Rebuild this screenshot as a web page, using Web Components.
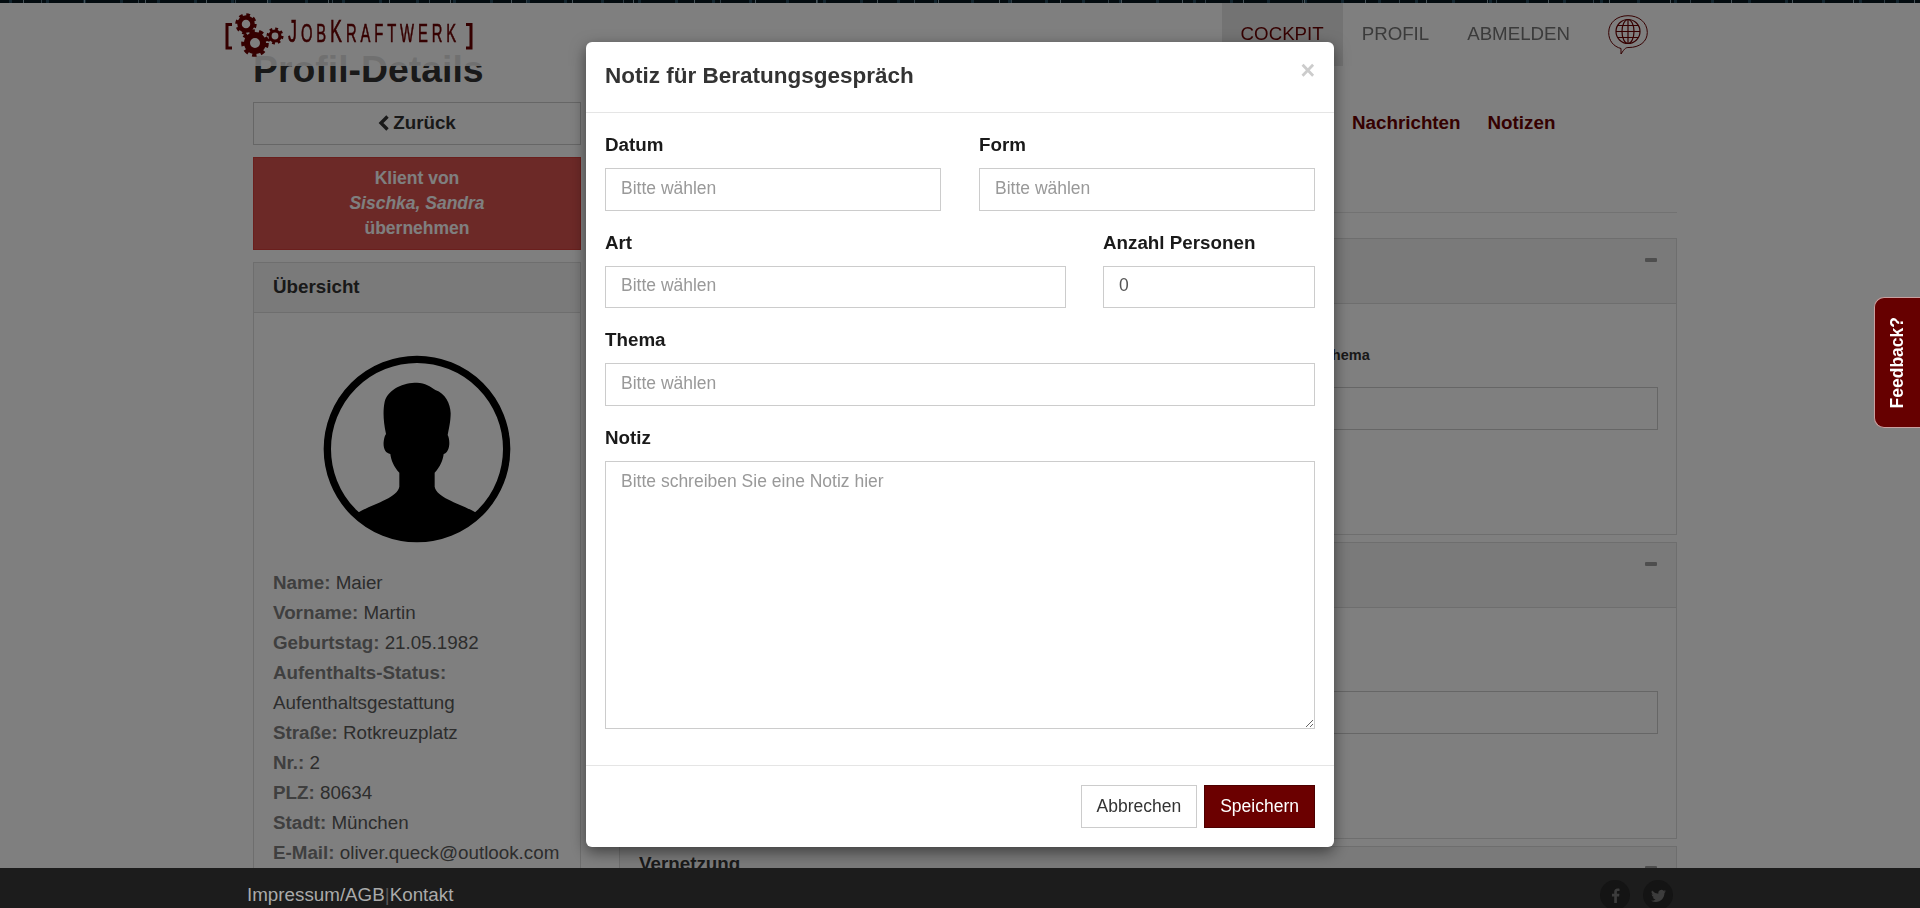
<!DOCTYPE html>
<html lang="de">
<head>
<meta charset="utf-8">
<title>JobKraftwerk - Profil-Details</title>
<style>
  html, body { margin: 0; height: 100%; overflow: hidden; background: #fff; }
  body { font: 18.8px/25px "Liberation Sans", Arial, sans-serif; color: #333; }
</style>
</head>
<body>
<job-nav></job-nav>

<profile-page>
  <client-sidebar slot="side" name="Sischka, Sandra">
    <info-row label="Name:">Maier</info-row>
    <info-row label="Vorname:">Martin</info-row>
    <info-row label="Geburtstag:">21.05.1982</info-row>
    <info-row label="Aufenthalts-Status:"></info-row>
    <info-row>Aufenthaltsgestattung</info-row>
    <info-row label="Straße:">Rotkreuzplatz</info-row>
    <info-row label="Nr.:">2</info-row>
    <info-row label="PLZ:">80634</info-row>
    <info-row label="Stadt:">München</info-row>
    <info-row label="E-Mail:">oliver.queck@outlook.com</info-row>
  </client-sidebar>

  <collapse-panel field="Thema"></collapse-panel>
  <collapse-panel></collapse-panel>
  <collapse-panel>Vernetzung</collapse-panel>
</profile-page>

<note-modal></note-modal>
<site-footer></site-footer>
<feedback-tab>Feedback?</feedback-tab>

<script>
// Top navigation
class JobNav extends HTMLElement {
  constructor() {
    super();
    this.attachShadow({ mode: 'open' });
    this.shadowRoot.innerHTML = `
      <style>
        :host {
          position: fixed; top: 0; left: 0; right: 0; z-index: 5;
          display: block; height: 66px;
          background: rgba(255, 255, 255, .86);
        }
        .stars {
          height: 3px;
          background-color: #07161f;
          background-image:
            repeating-linear-gradient(90deg, transparent 0 23px, #8fa6b2 23px 24px, transparent 24px 61px),
            repeating-linear-gradient(90deg, transparent 0 9px, #24495c 9px 12px, transparent 12px 37px),
            repeating-linear-gradient(90deg, transparent 0 41px, #5b7787 41px 42px, transparent 42px 97px);
        }
        .bar {
          display: flex; justify-content: space-between; align-items: flex-start;
          height: 63px; padding: 0 272px 0 225px;
        }
        .logo { width: 248px; height: 63px; position: relative; color: #6b0000; }
        .logo svg { position: absolute; left: 0; top: -3px; }
        .name {
          position: absolute; left: 63px; top: 14px; white-space: nowrap;
          font-size: 25.5px; line-height: 30px; letter-spacing: 6.7px;
          -webkit-text-stroke: .6px #6b0000;
          transform: scaleX(.58); transform-origin: left center;
        }
        .name b { font-size: 31px; font-weight: 400; }
        .links { display: flex; align-items: flex-start; font-size: 18.7px; }
        a { display: block; padding: 0 19px; line-height: 62px; height: 63px; color: #777; text-decoration: none; }
        a.on { color: #6b0000; background: #e7e7e7; }
        .globe { margin: 12px 0 0 19px; display: block; }
      </style>
      <div class="stars"></div>
      <div class="bar">
        <div class="logo">
          <svg width="248" height="66" viewBox="0 0 248 66" fill="none" stroke="#6b0000">
            <path d="M7 24.5H2V48H7M241 24.5H246V48H241" stroke-width="3"/>
            <circle cx="21" cy="24" r="6.5" stroke-width="4.500"/>
            <circle cx="21" cy="24" r="9" stroke-width="3.400" stroke-dasharray="3.600 3.470"/>
            <circle cx="30" cy="43" r="8" stroke-width="6"/>
            <circle cx="30" cy="43" r="12" stroke-width="3.600" stroke-dasharray="4.400 4.200"/>
            <circle cx="50" cy="36" r="5" stroke-width="3.200"/>
            <circle cx="50" cy="36" r="7.200" stroke-width="2.600" stroke-dasharray="2.800 2.850"/>
          </svg>
          <span class="name"><b>J</b>OB<b>K</b>RAFTWERK</span>
        </div>
        <div class="links">
          <a class="on" href="#">COCKPIT</a>
          <a href="#">PROFIL</a>
          <a href="#">ABMELDEN</a>
          <svg class="globe" width="40" height="40" viewBox="0 0 40 40" fill="none" stroke="#6b0000" stroke-width="1.200">
            <path d="M13 33.500C5.500 31.500 .7 25.800 .7 17.500 .7 7.500 9 .7 20 .7s19.300 6.800 19.300 16.800C39.300 27 31 32.500 21 32.500c-3 0-4 .3-8 6.500z" stroke-width="1"/>
            <circle cx="20" cy="16.500" r="12"/>
            <ellipse cx="20" cy="16.500" rx="6" ry="12"/>
            <path d="M20 4.500V28.500M8 16.500H32M9.500 10.500H30.500M9.500 22.500H30.500"/>
          </svg>
        </div>
      </div>`;
  }
}

// Two column page below the nav
class ProfilePage extends HTMLElement {
  constructor() {
    super();
    this.attachShadow({ mode: 'open' });
    this.shadowRoot.innerHTML = `
      <style>
        :host {
          display: grid; grid-template-columns: 328px 1fr; column-gap: 38px;
          padding: 50px 243px 0 253px;
        }
        h1 { margin: 0 0 12px; font-size: 37.4px; line-height: 38px; padding-bottom: 2px; font-weight: 700; color: #333; white-space: nowrap; }
        .tabs {
          display: flex; gap: 27px; height: 103px; margin: 59px 0 25px; padding: 0 0 0 733px;
          border-bottom: 1px solid #e5e5e5; box-sizing: content-box;
          font-weight: 700; color: #6b0000;
        }
        .tabs span { margin-top: 1px; }
      </style>
      <div>
        <h1>Profil-Details</h1>
        <slot name="side"></slot>
      </div>
      <div>
        <div class="tabs"><span>Nachrichten</span><span>Notizen</span></div>
        <slot></slot>
      </div>`;
  }
}

class ClientSidebar extends HTMLElement {
  constructor() {
    super();
    this.attachShadow({ mode: 'open' });
  }

  connectedCallback() {
    this.shadowRoot.innerHTML = `
      <style>
        :host { display: block; }
        .back {
          display: flex; justify-content: center; align-items: center; gap: 4px;
          height: 39px; padding-bottom: 2px; border: 1px solid #ccc; font-weight: 700; color: #333;
        }
        .take {
          margin: 12px 0; padding: 8px 0; height: 75px; background: #d9534f; color: #fff;
          border: 1px solid #d43f3a; box-sizing: content-box; text-align: center; line-height: 25px; font-size: 17.5px;
        }
        .take b { display: block; }
        .take i { display: block; font-weight: 700; }
        .panel { border: 1px solid #ddd; padding-bottom: 60px; }
        .head {
          height: 49px; line-height: 48px; padding: 0 19px;
          background: #f5f5f5; border-bottom: 1px solid #ddd; font-weight: 700;
        }
        .avatar { display: block; margin: 42px auto 25px; }
        .rows { padding: 0 19px; }
      </style>
      <div class="back">
        <svg width="11" height="16" viewBox="0 0 11 16" fill="none" stroke="#333" stroke-width="3.400"><path d="M9.500 1.500 3 8l6.500 6.500"/></svg>
        <span>Zurück</span>
      </div>
      <div class="take"><b>Klient von</b><i>${this.getAttribute('name')}</i><b>übernehmen</b></div>
      <div class="panel">
        <div class="head">Übersicht</div>
        <svg class="avatar" width="188" height="188" viewBox="369 225 562 564">
          <circle cx="650" cy="507" r="269" fill="none" stroke="#000" stroke-width="22"/>
          <path fill="#000" d="M467 702L475 697C520 670 590 655 597 620L597 578C580 560 572 540 570 522C555 520 548 505 550 485C552 470 555 465 557 462C548 420 548 390 553 365C565 325 610 308 650 308C675 308 690 320 705 330C735 340 750 370 751 400C751 425 745 450 742 465C750 480 750 515 730 522C728 540 720 560 703 578L703 620C710 655 780 670 825 697L833 702A267 267 0 0 1 467 702Z"/>
        </svg>
        <div class="rows"><slot></slot></div>
      </div>`;
  }
}

class InfoRow extends HTMLElement {
  constructor() {
    super();
    this.attachShadow({ mode: 'open' });
  }

  connectedCallback() {
    const label = this.getAttribute('label');
    this.shadowRoot.innerHTML = `
      <style>
        :host { display: block; line-height: 30px; color: #5a5a5a; white-space: nowrap; }
        b { color: #7e7e7e; }
      </style>
      ${label ? `<b>${label}</b> ` : ''}<slot></slot>`;
  }
}

class CollapsePanel extends HTMLElement {
  constructor() {
    super();
    this.attachShadow({ mode: 'open' });
  }

  connectedCallback() {
    const field = this.getAttribute('field');
    this.shadowRoot.innerHTML = `
      <style>
        :host { display: block; margin-bottom: 7px; border: 1px solid #ddd; }
        .head {
          display: flex; justify-content: space-between; height: 60px; padding: 4px 19px 0;
          background: #f5f5f5; border-bottom: 1px solid #ddd; font-weight: 700; color: #333;
        }
        .minus { width: 12px; height: 4px; margin-top: 15px; border-radius: 1px; background: #9c9c9c; }
        .body { height: 230px; padding: 0 19px; box-sizing: border-box; }
        .label { height: 83px; padding: 41px 0 0 684px; box-sizing: border-box; font-size: 14.5px; line-height: 20px; font-weight: 700; color: #333; }
        .field { height: 41px; margin-right: -1px; border: 1px solid #ccc; }
      </style>
      <div class="head"><span><slot></slot></span><span class="minus"></span></div>
      <div class="body">
        <div class="label">${field || ''}</div>
        <div class="field"></div>
      </div>`;
  }
}

// Label plus input, used in the modal form
class FormField extends HTMLElement {
  constructor() {
    super();
    this.attachShadow({ mode: 'open' });
  }

  connectedCallback() {
    const placeholder = this.getAttribute('placeholder') || '';
    const value = this.getAttribute('value') || '';
    const control = this.hasAttribute('multiline')
      ? `<textarea placeholder="${placeholder}"></textarea>`
      : `<input placeholder="${placeholder}" value="${value}">`;
    this.shadowRoot.innerHTML = `
      <style>
        :host { display: block; margin-bottom: 21px; }
        label { display: block; height: 25px; margin-bottom: 9px; line-height: 22px; font-weight: 700; color: #1a1a1a; }
        input, textarea {
          display: block; width: 100%; box-sizing: border-box; margin: 0; border: 1px solid #ccc; border-radius: 0;
          padding: 0 15px 2px; height: 42.500px; font: inherit; font-size: 17.5px; color: #555; background: #fff; outline: none;
        }
        textarea { height: 268px; padding-top: 7px; line-height: 25px; resize: vertical; }
        ::placeholder { color: #999; opacity: 1; }
      </style>
      <label>${this.getAttribute('label')}</label>
      ${control}`;
  }
}

class NoteModal extends HTMLElement {
  constructor() {
    super();
    this.attachShadow({ mode: 'open' });
    this.shadowRoot.innerHTML = `
      <style>
        :host {
          position: fixed; inset: 0; z-index: 10; display: flex; justify-content: center; align-items: flex-start;
          padding-top: 42px; background: rgba(0, 0, 0, .5);
        }
        .dialog {
          width: 748px; background: #fff; border-radius: 6px;
          box-shadow: 0 5px 15px rgba(0, 0, 0, .5);
        }
        header {
          display: flex; justify-content: space-between; height: 70px; padding: 0 19px;
          border-bottom: 1px solid #e5e5e5;
        }
        h4 { margin: 0; padding-top: 21px; font-size: 22.5px; line-height: 26px; font-weight: 700; color: #333; }
        .close { margin-top: 13px; font-size: 25px; line-height: 30px; font-weight: 700; color: #ccc; }
        .body { padding: 21px 19px 15.500px; }
        .two { display: grid; grid-template-columns: 336px 336px; column-gap: 38px; }
        .wide { display: grid; grid-template-columns: 461px 212px; column-gap: 37px; }
        footer {
          display: flex; justify-content: flex-end; gap: 7px; padding: 19px;
          border-top: 1px solid #e5e5e5;
        }
        button {
          height: 43px; padding: 0 15px; font: inherit; font-size: 17.5px; border: 1px solid #ccc; background: #fff; color: #333; border-radius: 0;
        }
        button.save { background: #6b0000; border-color: #4d0000; color: #fff; }
      </style>
      <div class="dialog">
        <header><h4>Notiz für Beratungsgespräch</h4><span class="close">×</span></header>
        <div class="body">
          <div class="two">
            <form-field label="Datum" placeholder="Bitte wählen"></form-field>
            <form-field label="Form" placeholder="Bitte wählen"></form-field>
          </div>
          <div class="wide">
            <form-field label="Art" placeholder="Bitte wählen"></form-field>
            <form-field label="Anzahl Personen" value="0"></form-field>
          </div>
          <form-field label="Thema" placeholder="Bitte wählen"></form-field>
          <form-field label="Notiz" placeholder="Bitte schreiben Sie eine Notiz hier" multiline></form-field>
        </div>
        <footer><button>Abbrechen</button><button class="save">Speichern</button></footer>
      </div>`;
  }
}

class SiteFooter extends HTMLElement {
  constructor() {
    super();
    this.attachShadow({ mode: 'open' });
    this.shadowRoot.innerHTML = `
      <style>
        :host {
          position: fixed; left: 0; right: 0; bottom: 0; z-index: 20; height: 40px; overflow: hidden;
          display: flex; justify-content: space-between; padding: 0 247px 0 247px; background: #1c1c1c; color: #aaa;
        }
        .links { line-height: 53px; height: 40px; }
        .links i { font-style: normal; color: #555; }
        .social { display: flex; gap: 13px; padding-top: 12px; }
        .social span { display: flex; align-items: center; justify-content: center; width: 30px; height: 30px; border-radius: 50%; background: #141414; }
        svg { fill: #3c3c3c; }
      </style>
      <div class="links">Impressum/AGB<i>|</i>Kontakt</div>
      <div class="social">
        <span><svg width="15" height="15" viewBox="0 0 16 16"><path d="M9.500 16V9h2.300l.4-2.800H9.500V4.500c0-.8.2-1.300 1.300-1.300h1.500V.7C12 .7 11.200.6 10.200.6 8 .6 6.600 1.900 6.600 4.200v2H4.200V9h2.400v7z"/></svg></span>
        <span><svg width="15" height="15" viewBox="0 0 16 16"><path d="M5.026 15c6.038 0 9.341-5.003 9.341-9.334 0-.14 0-.282-.006-.422A6.685 6.685 0 0 0 16 3.542a6.658 6.658 0 0 1-1.889.518 3.301 3.301 0 0 0 1.447-1.817 6.533 6.533 0 0 1-2.087.793A3.286 3.286 0 0 0 7.875 6.030a9.325 9.325 0 0 1-6.767-3.429 3.289 3.289 0 0 0 1.018 4.382A3.323 3.323 0 0 1 .64 6.575v.045a3.288 3.288 0 0 0 2.632 3.218 3.203 3.203 0 0 1-.865.115 3.230 3.230 0 0 1-.614-.057 3.283 3.283 0 0 0 3.067 2.277A6.588 6.588 0 0 1 .78 13.580a6.320 6.320 0 0 1-.78-.045A9.344 9.344 0 0 0 5.026 15z"/></svg></span>
      </div>`;
  }
}

class FeedbackTab extends HTMLElement {
  constructor() {
    super();
    this.attachShadow({ mode: 'open' });
    this.shadowRoot.innerHTML = `
      <style>
        :host {
          position: fixed; right: 0; top: 297px; z-index: 20; width: 46px; height: 131px;
          display: flex; align-items: center; justify-content: center;
          background: #660000; border: 1px solid #c9a0a0; border-right: 0; border-radius: 10px 0 0 10px; box-sizing: border-box;
          color: #fff; font-size: 17.5px; font-weight: 700;
        }
        span { writing-mode: vertical-rl; transform: rotate(180deg); }
      </style>
      <span><slot></slot></span>`;
  }
}

customElements.define('job-nav', JobNav);
customElements.define('profile-page', ProfilePage);
customElements.define('client-sidebar', ClientSidebar);
customElements.define('info-row', InfoRow);
customElements.define('collapse-panel', CollapsePanel);
customElements.define('form-field', FormField);
customElements.define('note-modal', NoteModal);
customElements.define('site-footer', SiteFooter);
customElements.define('feedback-tab', FeedbackTab);
</script>
</body>
</html>
